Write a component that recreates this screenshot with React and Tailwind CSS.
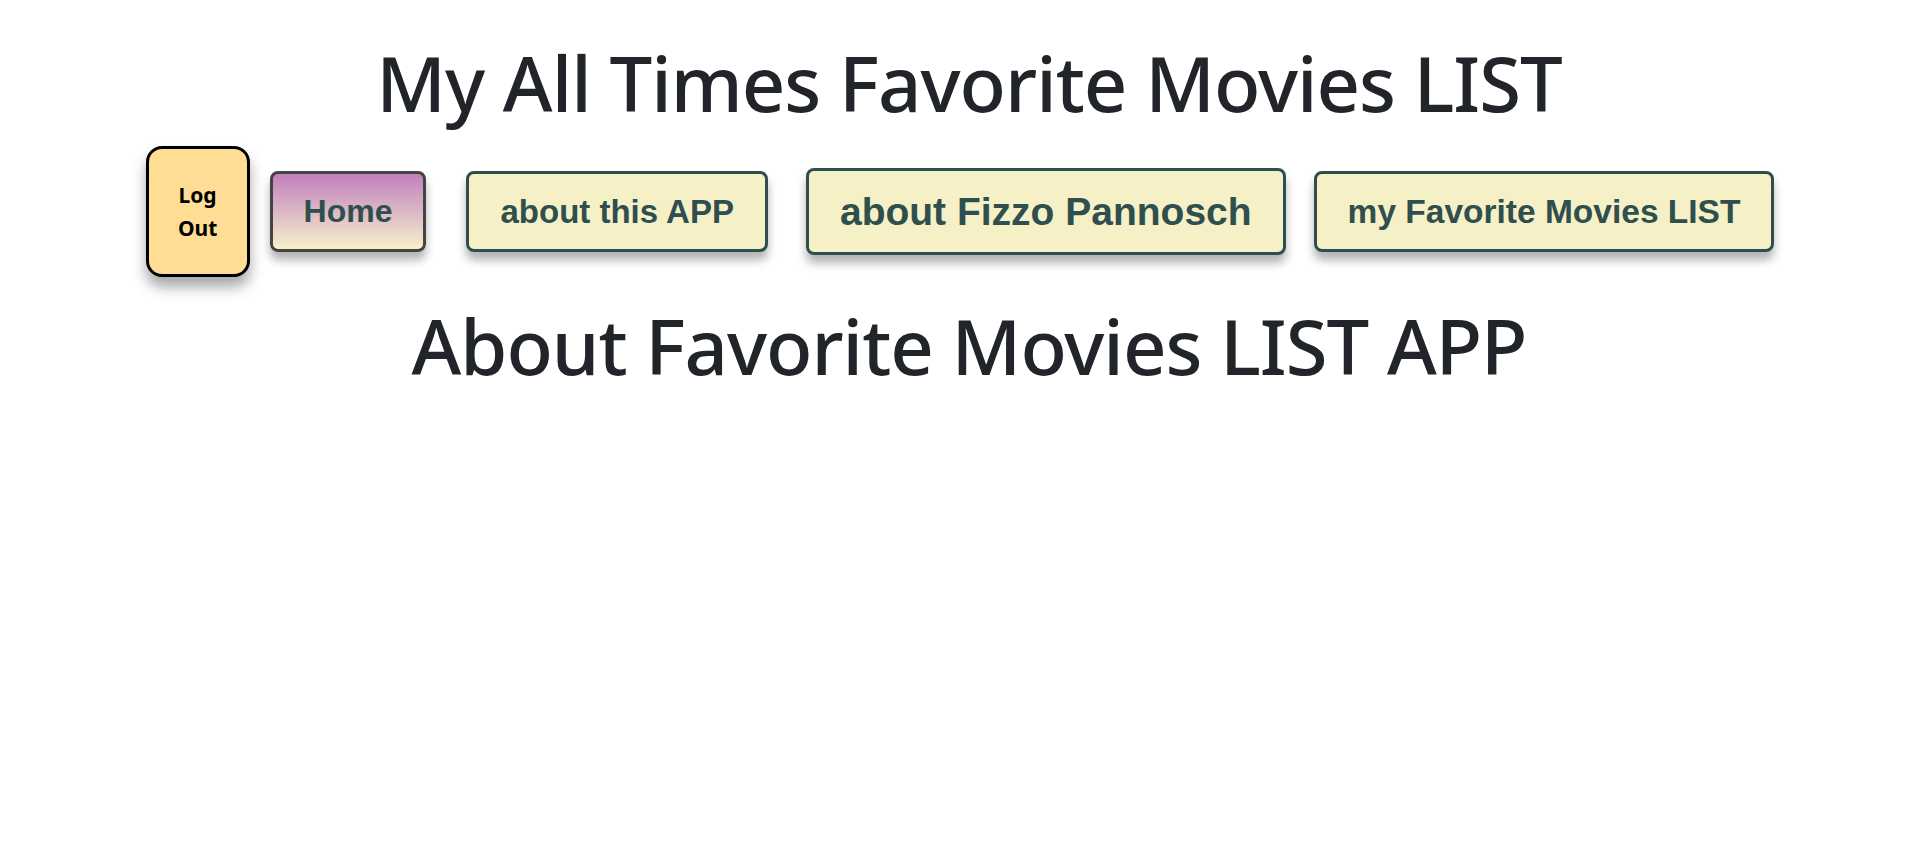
const navButtons = [
  { label: "about this APP", size: "text-[33px] leading-[37px]", margin: "ml-[40px]" },
  { label: "about Fizzo Pannosch", size: "text-[39px] leading-[43px]", margin: "ml-[38px]" },
  { label: "my Favorite Movies LIST", size: "text-[33.5px] leading-[37px]", margin: "ml-[28px]" },
];

const App = () => {
  return (
    <div className="min-h-[856px] w-full bg-white text-[#212529] [font-family:'Noto_Sans',sans-serif]">
      <h1 className="pl-[26px] pt-[37px] text-center text-[76px] font-medium leading-[91px] tracking-[-1px]">
        My All Times Favorite Movies LIST
      </h1>

      <nav className="mt-[18px] flex items-center justify-center pl-[8px]">
        {/* Log out */}
        <button className="flex h-[131px] w-[104px] items-center justify-center rounded-[16px] border-[3px] border-black bg-[#ffdd94] px-3 text-[21px] font-bold leading-[33px] text-black shadow-[0_10px_14px_rgba(0,0,0,0.35)]">
          Log Out
        </button>

        <button className="ml-[20px] rounded-[8px] border-[3px] border-[#444444] bg-gradient-to-b from-[#c07fbd] to-[#f7f1c8] px-[31px] py-[19px] text-[32px] font-bold leading-[37px] text-[#2f4f4f] shadow-[0_8px_10px_rgba(0,0,0,0.3)] [font-family:'Liberation_Sans',Arial,sans-serif]">
          Home
        </button>

        {navButtons.map((b) => (
          <button
            key={b.label}
            className={`${b.margin} ${b.size} rounded-[8px] border-[3px] border-[#2f4f4f] bg-[#f6f0c6] px-[31px] py-[19px] font-bold text-[#2f4f4f] shadow-[0_8px_10px_rgba(0,0,0,0.3)] [font-family:'Liberation_Sans',Arial,sans-serif]`}
          >
            {b.label}
          </button>
        ))}
      </nav>

      <h2 className="mt-[23px] pl-[26px] text-center text-[76px] font-medium leading-[91px] tracking-[-1px]">
        About Favorite Movies LIST APP
      </h2>
    </div>
  );
};

export default App;
